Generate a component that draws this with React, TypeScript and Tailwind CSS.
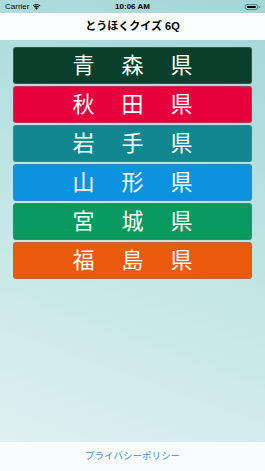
import React from "react";

const items = [
  { t: ["青", "森", "県"], c: "bg-[#0a3f2b]" },
  { t: ["秋", "田", "県"], c: "bg-[#e6003c]" },
  { t: ["岩", "手", "県"], c: "bg-[#138790]" },
  { t: ["山", "形", "県"], c: "bg-[#0c93df]" },
  { t: ["宮", "城", "県"], c: "bg-[#07995f]" },
  { t: ["福", "島", "県"], c: "bg-[#ea5a0c]" },
];

export default function App() {
  return (
    <div
      className="w-[265px] h-[471px] flex flex-col overflow-hidden bg-[linear-gradient(200deg,#a3d6d6_0%,#c4e6e6_55%,#e2f1f3_100%)]"
      style={{ fontFamily: '"Liberation Sans", "Noto Sans CJK JP", sans-serif' }}
    >
      <div className="h-[13px] flex items-center justify-between px-[5px] text-[8px] text-black">
        <div className="flex items-center gap-[3px]">
          <span>Carrier</span>
          <svg width="9" height="7" viewBox="0 0 18 13">
            <path d="M9 13 L6 9.5 A4.5 4.5 0 0 1 12 9.5 Z" fill="#000" />
            <path d="M3.8 7.2 A7.5 7.5 0 0 1 14.2 7.2 L12.8 8.6 A5.5 5.5 0 0 0 5.2 8.6 Z" fill="#000" />
            <path d="M1.2 4.6 A11.5 11.5 0 0 1 16.8 4.6 L15.4 6 A9.5 9.5 0 0 0 2.6 6 Z" fill="#000" />
          </svg>
        </div>
        <span className="font-bold absolute left-1/2 -translate-x-1/2">10:06 AM</span>
        <div className="flex items-center gap-[1px]">
          <div className="w-[13px] h-[6px] rounded-[2px] border border-black/40 p-[1px]">
            <div className="w-full h-full bg-black rounded-[1px]" />
          </div>
          <div className="w-[1px] h-[2px] bg-black/40" />
        </div>
      </div>
      <div className="h-[27px] bg-[#fafefe] flex items-center justify-center text-[11px] font-bold text-black">
        とうほくクイズ 6Q
      </div>
      <div className="flex-1 flex flex-col gap-[2px] px-[13px] pt-[7px]">
        {items.map((it, i) => (
          <div
            key={i}
            className={`${it.c} h-[37px] rounded-[3px] border border-[#6a7f7f]/40 flex items-center justify-center text-white text-[22px] font-normal gap-[27px]`}
          >
            {it.t.map((ch, j) => (
              <span key={j} className="leading-none">{ch}</span>
            ))}
          </div>
        ))}
      </div>
      <div className="h-[29px] bg-[#f8fefe] flex items-center justify-center text-[9.5px] text-[#4a8cd4]">
        プライバシーポリシー
      </div>
    </div>
  );
}
